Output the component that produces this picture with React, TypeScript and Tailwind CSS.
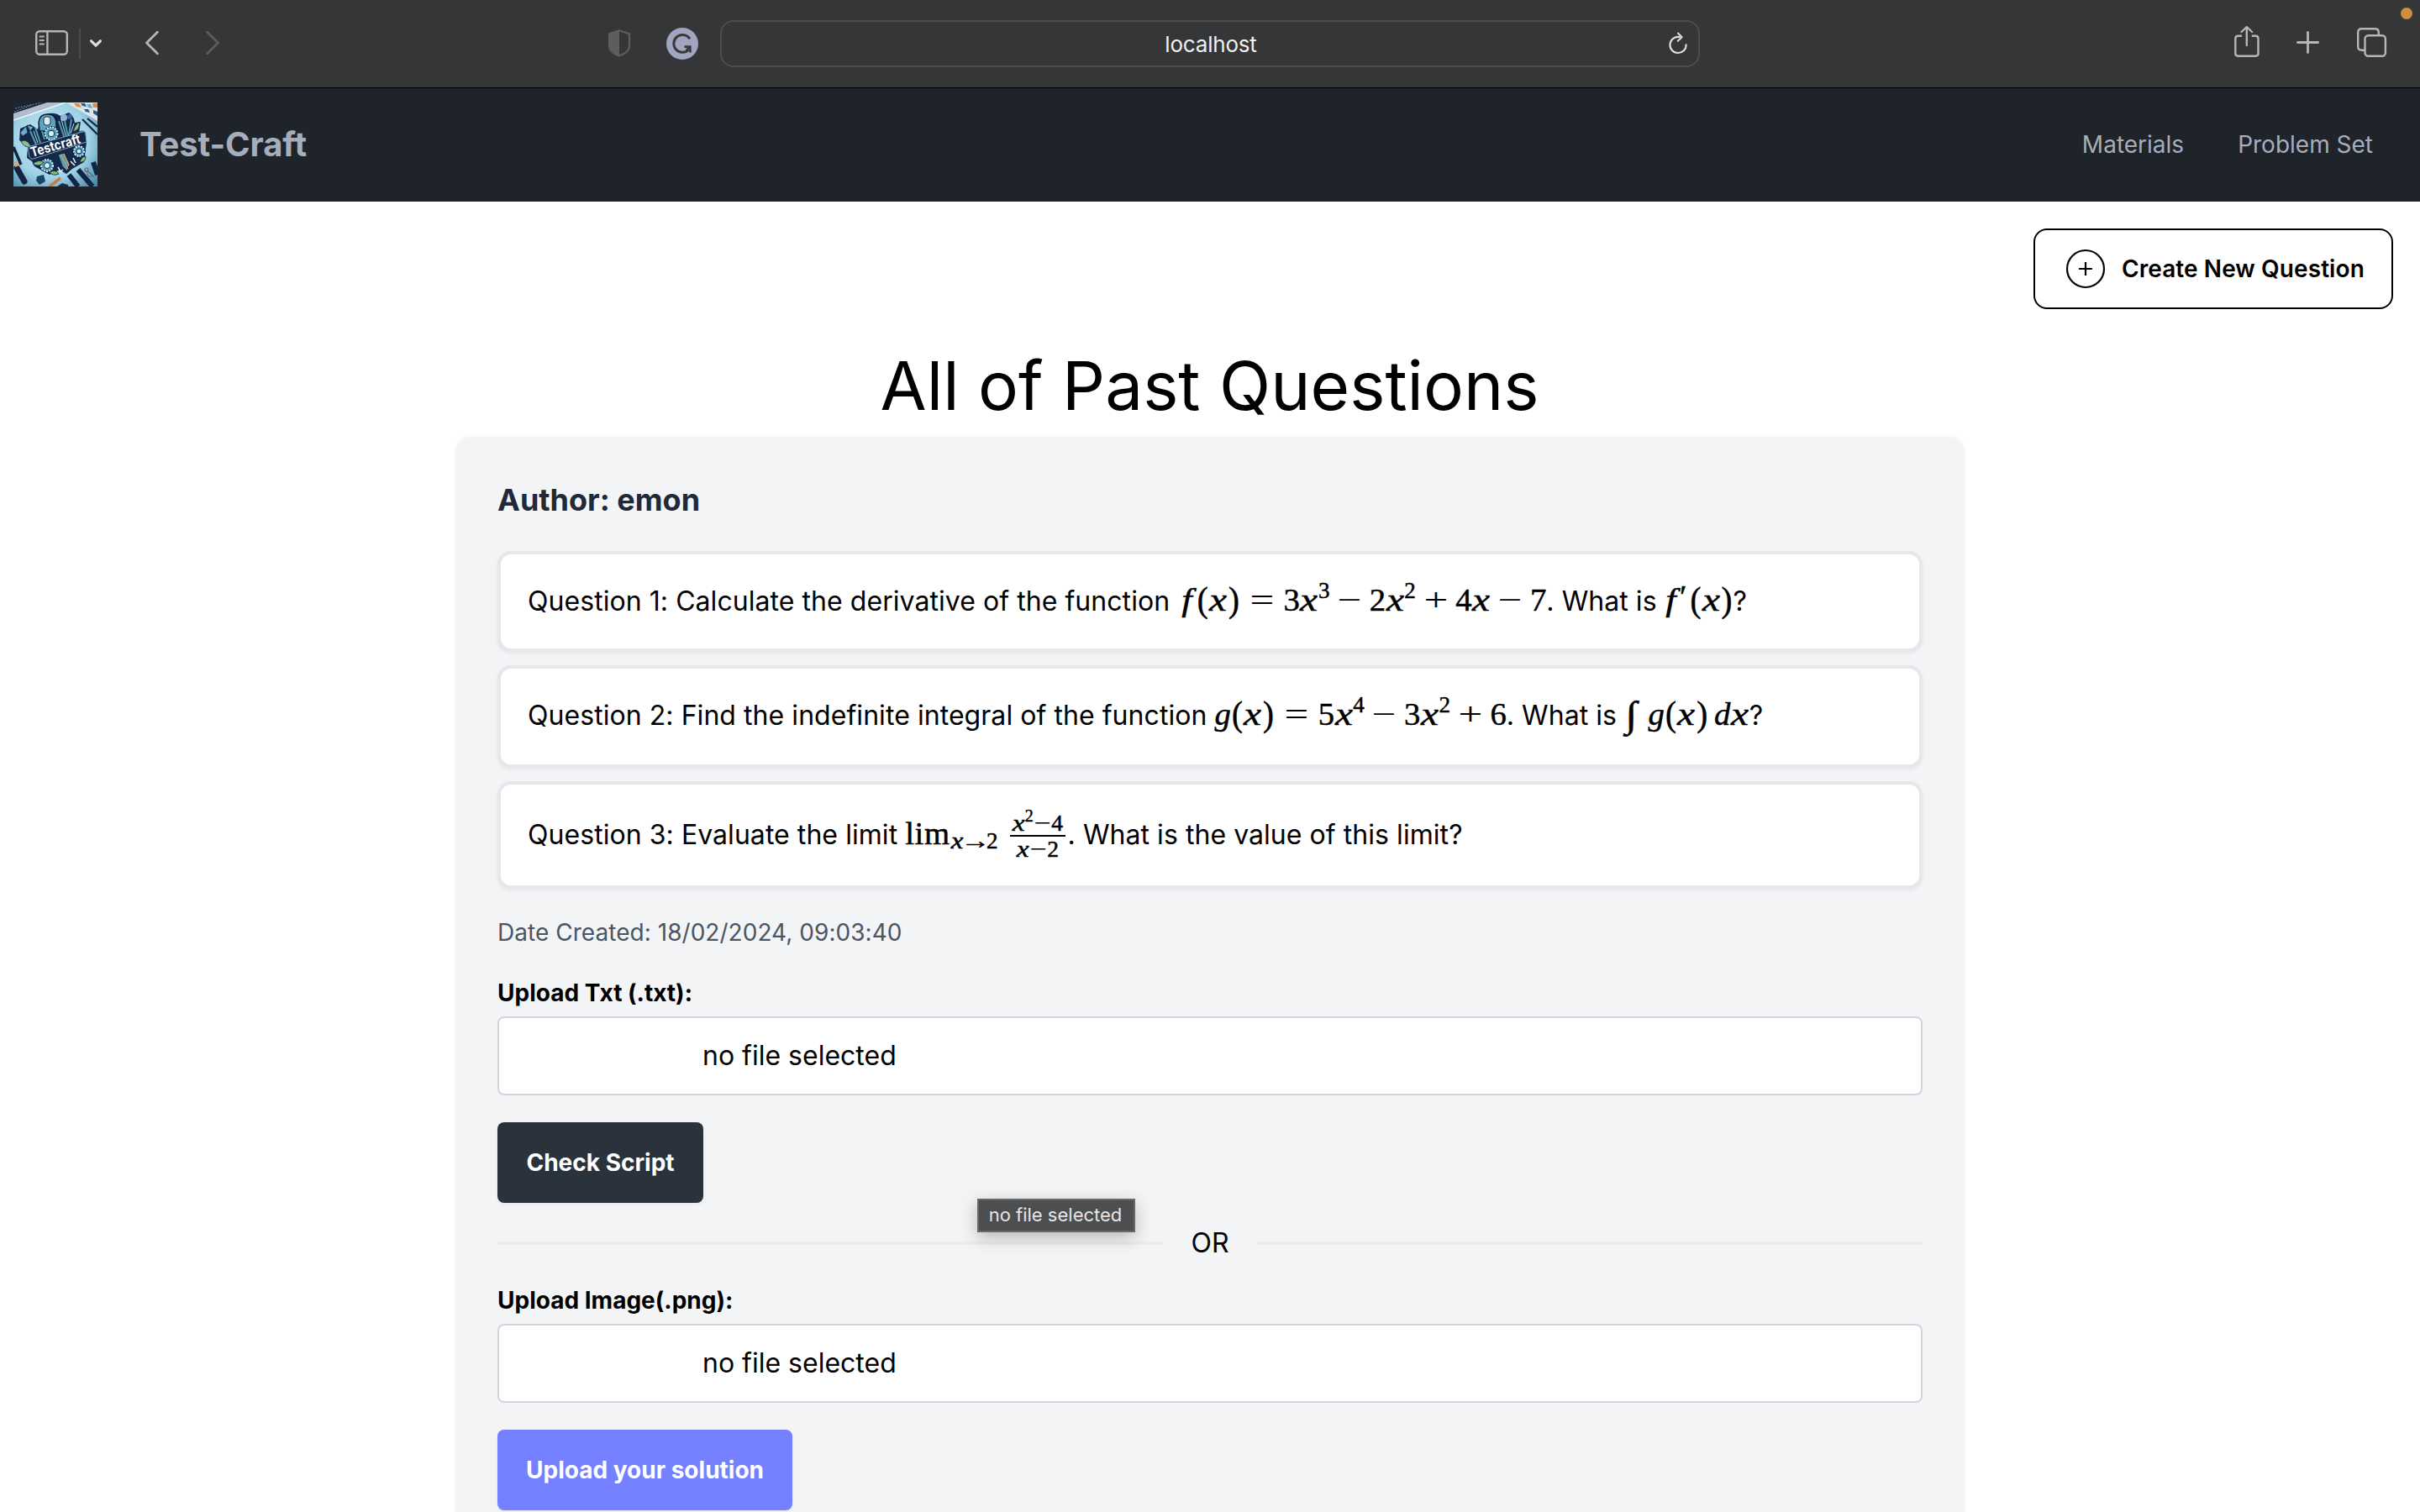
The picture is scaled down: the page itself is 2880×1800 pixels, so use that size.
import type { ReactNode } from "react";

const mathWidths = {
  f: "w-[0.58em]",
  g: "w-[0.5em]",
  x: "w-[0.572em]",
  d: "w-[0.52em]",
  paren: "w-[0.389em]",
  digit: "w-[0.5em]",
  op: "w-[0.778em]",
  arrow: "w-[1em]",
  int: "w-[0.64em]",
};

function Glyph({ w, className = "", children }: { w: keyof typeof mathWidths; className?: string; children: ReactNode }) {
  return (
    <span className={`inline-flex shrink-0 justify-center ${mathWidths[w]}`}>
      <span className={`inline-block ${className}`}>{children}</span>
    </span>
  );
}

const X = () => <Glyph w="x" className="scale-x-[1.22] italic">x</Glyph>;
const N = ({ children }: { children: ReactNode }) => <Glyph w="digit">{children}</Glyph>;
const F = () => <Glyph w="f" className="scale-x-[1.15] italic">f</Glyph>;
const G = () => <Glyph w="g" className="italic">g</Glyph>;
const Open = () => <Glyph w="paren" className="scale-y-[1.08]">(</Glyph>;
const Close = () => <Glyph w="paren" className="scale-y-[1.08]">)</Glyph>;
const Op = ({ children }: { children: ReactNode }) => <Glyph w="op" className="scale-x-[1.32] [-webkit-text-stroke:0px]">{children}</Glyph>;
const Bin = ({ children }: { children: ReactNode }) => (
  <span className="mx-[0.222em] inline-flex"><Op>{children}</Op></span>
);
const Rel = ({ children }: { children: ReactNode }) => (
  <span className="mx-[0.278em] inline-flex"><Op>{children}</Op></span>
);
const Sup = ({ children }: { children: ReactNode }) => (
  <span className="relative -top-[0.57em] inline-flex text-[0.7em]"><N>{children}</N></span>
);

function MathRow({ className = "", children }: { className?: string; children: ReactNode }) {
  return (
    <span className={`inline-flex items-baseline font-['Liberation_Serif',serif] text-[38.72px] leading-none tracking-normal [-webkit-text-stroke:0.5px_black] ${className}`}>{children}</span>
  );
}

function Question({ className, children }: { className: string; children: ReactNode }) {
  return (
    <div className={`rounded-2xl border-4 border-[#e5e7eb] bg-white px-8 shadow-[0_2px_4px_rgba(0,0,0,0.06)] ${className}`}>
      <div className="flex items-baseline text-[32px] leading-[48px] tracking-[0.055px] whitespace-pre">{children}</div>
    </div>
  );
}

function FileField({ label }: { label: string }) {
  return (
    <div className="mt-8">
      <div className="h-10 text-[28px] leading-10 font-bold">{label}</div>
      <div className="mt-2 flex h-[94px] items-center rounded-lg border-2 border-[#d1d5db] bg-white pl-[242px] text-[32px]">
        no file selected
      </div>
    </div>
  );
}

function Gear({ cx, cy, r }: { cx: number; cy: number; r: number }) {
  return (
    <g>
      <circle cx={cx} cy={cy} r={r} fill="none" stroke="#0d1c3a" strokeWidth="3" />
      <circle cx={cx} cy={cy} r={r} fill="#4f9fc0" stroke="#cdeef2" strokeWidth="2" strokeDasharray="2 1.3" />
      <circle cx={cx} cy={cy} r={r * 0.5} fill="#d5f0f2" stroke="#12294c" strokeWidth="1" />
    </g>
  );
}

function Logo() {
  return (
    <svg className="ml-4 size-[100px]" viewBox="0 0 100 100">
      <defs>
        <radialGradient id="desk" cx="0.45" cy="0.45" r="0.75">
          <stop offset="0" stopColor="#c9ecf5" />
          <stop offset="0.6" stopColor="#9fd2e6" />
          <stop offset="1" stopColor="#4787a8" />
        </radialGradient>
      </defs>
      <rect width="100" height="100" fill="url(#desk)" />
      <path d="M0 0H62L0 21Z" fill="#aebdcb" />
      <path d="M0 0H40L0 13Z" fill="#1b2536" />
      <path d="M2 7L34 0M1 11L22 3" stroke="#7d8da0" strokeWidth="1" strokeDasharray="2 1.5" />
      <path d="M0 21L62 0" stroke="#eef7fa" strokeWidth="1.5" />
      <path d="M62 0H100V22Z" fill="#dfe3e3" />
      <path d="M72 1h6l3 5-6-1zM94 1h6v5h-5z" fill="#d98b52" />
      <path d="M80 1h5l2 4-5-1zM84 8h5l2 4-5-1zM95 9l5 2v5l-5-3z" fill="#245890" />
      <path d="M87 2h5l2 5-5-1z" fill="#5ab5c6" />
      <path d="M82 20L100 38M88 19L100 29" stroke="#15243f" strokeWidth="2.2" />
      <path d="M0 53L9 74" stroke="#15243f" strokeWidth="3.5" />
      <path d="M33 17Q46 9 56 16L66 12Q72 16 73 24L80 23L78 36L83 45L87 47L84 71L70 79L63 85L55 80L43 86L25 76L22 70L16 66L17 53L7 45L8 31L20 26L29 32Z" fill="#15284a" />
      <path d="M30 24Q31 13 42 14Q52 15 51 27V34H31Z" fill="#5fa3ba" stroke="#0c1b36" strokeWidth="1.5" />
      <rect x="36" y="17" width="8" height="10" rx="3" fill="#d9edf2" stroke="#17365c" />
      <circle cx="60" cy="18" r="4" fill="#90b7d3" />
      <circle cx="67" cy="17" r="3" fill="#3864a0" />
      <path d="M8 36l7-8 2 8-6 4zM16 27l8 2-4 5z" fill="#6cabc9" stroke="#0c1b36" strokeWidth="0.7" />
      <path d="M20 34l7 16M26 30l6 18M54 22l7 21M61 22l4 19M69 20l-3 19M34 34l3 10" stroke="#4a9cad" strokeWidth="2" />
      <path d="M24 34l5 14M57 20l6 22M72 25l-4 12" stroke="#d3edf0" strokeWidth="0.9" />
      <path d="M9 46q8-3 12 7q-9 1-12-7zM71 35q2-8 7-12q2 9-7 12z" fill="#8bc284" stroke="#14294a" strokeWidth="0.8" />
      <path d="M74 38q7-7 12-2q-5 7-12 2z" fill="#4f9ec2" stroke="#14294a" strokeWidth="0.8" />
      <Gear cx={45} cy={37} r={7.5} />
      <Gear cx={40} cy={75} r={7} />
      <Gear cx={78} cy={58} r={6} />
      <path d="M53 62L60 60L67 73L64 82L58 76Z" fill="#4c9db9" stroke="#0b1831" />
      <path d="M56 62L65 79M60 61L66 75" stroke="#d29a66" strokeWidth="1.5" />
      <path d="M23 73q7-6 13-2q-5 7-13 2zM79 71q2-7 7-7q0 8-7 7zM43 83q7-4 11 2q-7 3-11-2z" fill="#83bd76" stroke="#14294a" strokeWidth="0.9" />
      <path d="M53 77l3 5 3-2M68 70l5 5M71 66l3 6" stroke="#edf7f5" strokeWidth="1.5" fill="none" />
      <path d="M17 53L82 35Q86 34 86 39L87 47L24 67Q20 68 19 64Z" fill="#152746" stroke="#6fa6bb" strokeWidth="1" />
      <text x="22" y="65" transform="rotate(-16 22 65)" textLength="61" lengthAdjust="spacingAndGlyphs" fontSize="16" className="fill-white font-['Inter',sans-serif] font-bold">Testcraft</text>
      <path d="M4 78L13 94" stroke="#14233e" strokeWidth="7" strokeLinecap="round" />
      <path d="M2 77l5-2-5-6z" fill="#e4a165" />
      <path d="M28 88l8-2 2 8-7 4-4-5z" fill="#1b4663" />
      <path d="M43 100L56 90" stroke="#c27e45" strokeWidth="3.5" />
      <path d="M66 86L77 100M77 80L94 100M95 71L100 86" stroke="#102447" strokeWidth="6" />
      <circle cx="87" cy="80" r="2" fill="none" stroke="#5f6c75" strokeWidth="1.2" />
      <path d="M89 82l6 6h-6l-2-6" fill="none" stroke="#5f6c75" strokeWidth="1.2" />
      <path d="M52 100l6-4 7 2v2z" fill="#152c4f" />
    </svg>
  );
}

function Toolbar() {
  return (
    <div className="relative flex h-[105px] shrink-0 items-start border-b border-black bg-[#353638]">
      <svg className="mt-[34px] ml-[40px] h-[36px] w-[43px] shrink-0" viewBox="0 0 43 36" fill="none" stroke="#b5b6b7" strokeWidth="2.4">
        <rect x="3.2" y="3.2" width="36.6" height="27.6" rx="4" />
        <path d="M16.4 3v28" />
        <path d="M7.5 9.5h4.5M7.5 14h4.5M7.5 18.5h4.5" strokeWidth="1.9" strokeLinecap="round" />
      </svg>
      <div className="mt-[34px] ml-[11px] h-[36px] w-[2px] bg-[#4a4b4d]" />
      <svg className="mt-[44px] ml-[9px] h-[16px] w-[18px]" viewBox="0 0 18 16" fill="none" stroke="#dededf" strokeWidth="3.2" strokeLinecap="round" strokeLinejoin="round">
        <path d="M3.6 4.8L9 10.2L14.4 4.8" />
      </svg>
      <svg className="mt-[34px] ml-[47px] h-[34px] w-[22px]" viewBox="0 0 22 34" fill="none" stroke="#b5b6b7" strokeWidth="2.8" strokeLinecap="round" strokeLinejoin="round">
        <path d="M17.4 4.3L4.5 17L17.4 29.7" />
      </svg>
      <svg className="mt-[34px] ml-[50px] h-[34px] w-[22px]" viewBox="0 0 22 34" fill="none" stroke="#5b5c5e" strokeWidth="2.8" strokeLinecap="round" strokeLinejoin="round">
        <path d="M4.6 4.3L17.5 17L4.6 29.7" />
      </svg>
      <svg className="mt-[34px] ml-[458px] h-[36px] w-[30px]" viewBox="0 0 30 36">
        <path d="M14.9 2.3L27 6.3V20.5Q27 28.5 14.9 32.4Q3 28.5 3 20.5V6.3Z" fill="none" stroke="#5c5d5f" strokeWidth="2.2" strokeLinejoin="round" />
        <path d="M15 1.5L2.5 5.8V21Q2.5 29 15 33.5Z" fill="#5c5d5f" />
      </svg>
      <svg className="mt-[33px] ml-[41px] size-[38px]" viewBox="0 0 38 38" fill="none" stroke="#38393d" strokeWidth="3">
        <circle cx="19" cy="19" r="19" fill="#a1a5c0" stroke="none" />
        <path d="M28 13.3A10.4 10.4 0 1 0 26.6 26.2" />
        <path d="M21.5 22.6H28.4V29.5M28.2 22.8L23.5 27.2" strokeWidth="2.6" />
      </svg>
      <div className="mt-6 ml-[26px] flex h-14 w-[1166px] items-center justify-end rounded-2xl border-2 border-[#4c4d4f] pr-[11px]">
        <div className="w-[1120px] pl-[34px] text-center text-[26px] tracking-[-0.2px] text-[#f0f0f0]">localhost</div>
        <svg className="h-[30px] w-[26px] shrink-0" viewBox="0 0 26 30" fill="none" stroke="#dededf" strokeWidth="2.1" strokeLinecap="round" strokeLinejoin="round">
          <path d="M14.6 7A9.6 9.6 0 1 0 22.6 16.2" />
          <path d="M13 2.5L17.5 7.2L12.8 11.8" />
        </svg>
      </div>
      <svg className="mt-[29px] ml-[634px] h-[41px] w-[34px]" viewBox="0 0 34 41" fill="none" stroke="#b5b6b7" strokeWidth="2.4" strokeLinecap="round" strokeLinejoin="round">
        <path d="M11 13.8H6.5Q3.3 13.8 3.3 17V34.5Q3.3 37.7 6.5 37.7H27.3Q30.5 37.7 30.5 34.5V17Q30.5 13.8 27.3 13.8H22.8" strokeLinecap="butt" />
        <path d="M16.8 25V3.4M10.5 9L16.8 3L23.1 9" />
      </svg>
      <svg className="mt-[35px] ml-[40px] size-[31px]" viewBox="0 0 31 31" stroke="#b5b6b7" strokeWidth="2.8" strokeLinecap="round">
        <path d="M15.5 3.4V27.6M3.4 15.5H27.6" />
      </svg>
      <svg className="mt-[31px] ml-[41px] size-[39px]" viewBox="0 0 39 39" fill="none" stroke="#b5b6b7" strokeWidth="2.4">
        <path d="M11.5 28.7H7.5Q3.2 28.7 3.2 24.5V7.5Q3.2 3.3 7.5 3.3H23.5Q27.8 3.3 27.8 7.5V11" />
        <rect x="11.5" y="11.2" width="24.4" height="24.6" rx="4" />
      </svg>
      <div className="absolute top-[9px] right-[9px] size-[14px] rounded-full bg-[#cd8e3e]" />
    </div>
  );
}

export default function App() {
  return (
    <div className="relative flex h-[1800px] w-[2880px] flex-col overflow-hidden bg-white font-['Inter',sans-serif] text-black">
      <Toolbar />
      <header className="flex h-[135px] shrink-0 items-center bg-[#1f232a] pb-px text-[#a6adbb]">
        <Logo />
        <div className="ml-[50px] text-[40px] font-bold tracking-[-0.1px]">Test-Craft</div>
        <nav className="mr-14 ml-auto flex gap-16 text-[28px]">
          <span>Materials</span>
          <span>Problem Set</span>
        </nav>
      </header>
      <div className="mt-8 mr-8 flex h-24 w-[428px] shrink-0 items-center self-end rounded-2xl border-2 border-black pl-[36px]">
        <svg className="size-[48px]" viewBox="0 0 48 48" fill="none" stroke="black" strokeWidth="2.2">
          <circle cx="24" cy="24" r="22" />
          <path d="M24 16V32M16 24H32" />
        </svg>
        <span className="ml-[19px] text-[28px] font-semibold tracking-[0.08px] whitespace-nowrap">Create New Question</span>
      </div>
      <h1 className="mt-[30px] h-[122px] shrink-0 pr-px text-center text-[80px] leading-[122px]">All of Past Questions</h1>
      <main className="h-[1400px] w-[1792px] shrink-0 self-center rounded-2xl bg-[#f3f4f6] p-12 shadow-[0_2px_6px_rgba(0,0,0,0.1)]">
        <h2 className="h-[54px] text-[36px] leading-[54px] font-bold text-[#1f2937]">Author: emon</h2>
        <div className="mt-[34px] flex flex-col gap-4">
          <Question className="h-[120px] pt-8">
            <span>Question 1: Calculate the derivative of the function </span>
            <MathRow>
              <F /><Open /><X /><Close /><Rel>=</Rel><N>3</N><X /><Sup>3</Sup><Bin>−</Bin><N>2</N><X /><Sup>2</Sup><Bin>+</Bin><N>4</N><X /><Bin>−</Bin><N>7</N>
            </MathRow>
            <span>. What is </span>
            <MathRow className="-ml-[4px]">
              <F /><span className="relative -top-[0.1em] w-[0.29em]">′</span><Open /><X /><Close />
            </MathRow>
            <span>?</span>
          </Question>
          <Question className="h-[122px] pt-8">
            <span>Question 2: Find the indefinite integral of the function </span>
            <MathRow>
              <G /><Open /><X /><Close /><Rel>=</Rel><N>5</N><X /><Sup>4</Sup><Bin>−</Bin><N>3</N><X /><Sup>2</Sup><Bin>+</Bin><N>6</N>
            </MathRow>
            <span>. What is </span>
            <MathRow className="-ml-[4px]">
              <Glyph w="int" className="scale-x-[1.3] scale-y-[1.12]">∫</Glyph><span className="w-[0.2em]" /><G /><Open /><X /><Close /><span className="w-[0.167em]" /><Glyph w="d" className="italic">d</Glyph><X />
            </MathRow>
            <span>?</span>
          </Question>
          <Question className="h-[128px] pt-9">
            <span>Question 3: Evaluate the limit </span>
            <MathRow>
              <span className="w-[1.4em] tracking-[0.6px]">lim</span>
              <span className="relative top-[5px] inline-flex text-[0.7em]">
                <X /><Glyph w="arrow" className="scale-x-[1.3]">→</Glyph><N>2</N>
              </span>
              <span className="relative -top-[16px] ml-[14px] flex w-[66px] flex-col items-center text-[27.5px]">
                <span className="flex h-[30px] items-baseline">
                  <X />
                  <span className="relative -top-[11px] text-[20px]"><N>2</N></span>
                  <Op>−</Op><N>4</N>
                </span>
                <span className="-mt-[2px] h-[2px] w-full bg-black" />
                <span className="flex h-[30px] items-baseline pt-[1px]"><X /><Op>−</Op><N>2</N></span>
              </span>
            </MathRow>
            <span className="ml-[3px]">. What is the value of this limit?</span>
          </Question>
        </div>
        <div className="mt-8 h-10 text-[28px] leading-10 tracking-[0.04px] text-[#4b5563]">Date Created: 18/02/2024, 09:03:40</div>
        <FileField label="Upload Txt (.txt):" />
        <button className="mt-8 flex h-24 w-[245px] items-center justify-center rounded-lg bg-[#2a323c] text-[28px] font-bold whitespace-nowrap text-white shadow-[0_2px_4px_rgba(0,0,0,0.05)]">Check Script</button>
        <div className="mt-8 flex h-8 items-center gap-8 text-[32px] leading-8">
          <div className="h-1 flex-1 bg-[#ebecee]" />
          OR
          <div className="h-1 flex-1 bg-[#ebecee]" />
        </div>
        <FileField label="Upload Image(.png):" />
        <button className="mt-8 flex h-24 w-[351px] items-center justify-center rounded-lg bg-[#7480ff] text-[28px] font-bold whitespace-nowrap text-white shadow-[0_2px_4px_rgba(0,0,0,0.05)]">Upload your solution</button>
      </main>
      <div className="absolute top-[1427px] left-[1163px] flex h-[40px] w-[188px] items-center justify-center border-2 border-[#67686a] bg-[#4d4e50] pr-[2px] pb-px text-[22px] text-[#e6e6e6] shadow-[0_6px_20px_rgba(0,0,0,0.25)]">no file selected</div>
    </div>
  );
}
